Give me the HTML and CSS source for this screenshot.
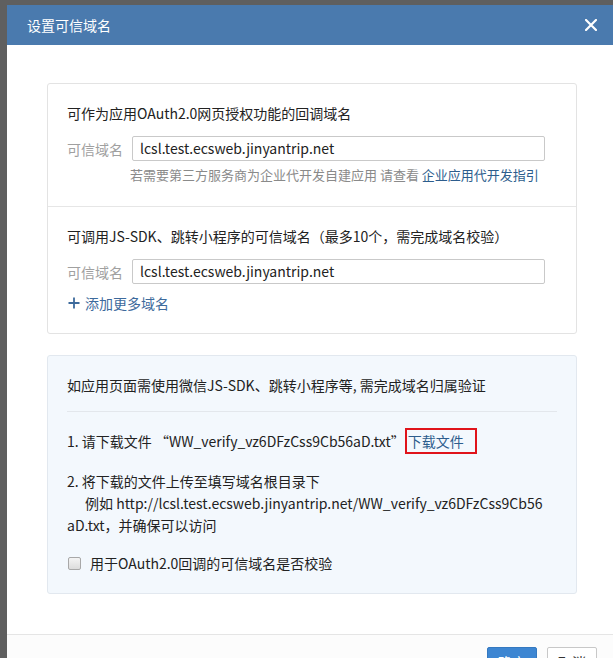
FILE: index.html
```html
<!DOCTYPE html>
<html lang="zh-CN">
<head>
<meta charset="utf-8">
<title>设置可信域名</title>
<link rel="stylesheet" href="styles.css">
</head>
<body>
<div class="dialog">
  <div class="dialog-header">
    <span class="dialog-title">设置可信域名</span>
    <svg class="close" width="12" height="12" viewBox="0 0 12 12"><path d="M1 1 L11 11 M11 1 L1 11" stroke="#fff" stroke-width="2.2" stroke-linecap="square"/></svg>
  </div>
  <div class="dialog-body">
    <div class="card">
      <div class="section">
        <div class="sec-title">可作为应用OAuth2.0网页授权功能的回调域名</div>
        <div class="field">
          <span class="label">可信域名</span>
          <div class="input">lcsl.test.ecsweb.jinyantrip.net</div>
        </div>
        <div class="hint">若需要第三方服务商为企业代开发自建应用 请查看 <a class="link">企业应用代开发指引</a></div>
      </div>
      <div class="section section-2">
        <div class="sec-title">可调用JS-SDK、跳转小程序的可信域名（最多10个，需完成域名校验）</div>
        <div class="field">
          <span class="label">可信域名</span>
          <div class="input">lcsl.test.ecsweb.jinyantrip.net</div>
        </div>
        <div class="add-more">
          <svg class="plus" width="12" height="12" viewBox="0 0 12 12"><path d="M6 0.5 V11.5 M0.5 6 H11.5" stroke="#3d6a9c" stroke-width="1.8"/></svg>
          <span>添加更多域名</span>
        </div>
      </div>
    </div>
    <div class="verify">
      <div class="verify-title">如应用页面需使用微信JS-SDK、跳转小程序等, 需完成域名归属验证</div>
      <div class="verify-divider"></div>
      <div class="step step-1">1. 请下载文件 “WW_verify_vz6DFzCss9Cb56aD.txt”<span class="dl-box"><a class="link">下载文件</a></span></div>
      <div class="step step-2">2. 将下载的文件上传至填写域名根目录下<br><span class="indent">例如 http://lcsl.test.ecsweb.jinyantrip.net/WW_verify_vz6DFzCss9Cb56</span><br>aD.txt，并确保可以访问</div>
      <label class="check">
        <span class="checkbox"></span>
        <span>用于OAuth2.0回调的可信域名是否校验</span>
      </label>
    </div>
  </div>
  <div class="dialog-footer">
    <button class="btn btn-primary">确定</button>
    <button class="btn btn-default">取消</button>
  </div>
</div>
</body>
</html>
```
FILE: styles.css
```css
html, body {
  margin: 0;
  padding: 0;
  overflow: hidden;
  height: 658px;
}
body {
  background: #5f5f5f;
  font-family: "Noto Sans CJK SC", "Noto Sans", sans-serif;
  font-size: 14px;
  color: #333;
}
.dialog {
  margin: 5px 0 0 7px;
  width: 610px;
  background: #fff;
}
.dialog-header {
  height: 40px;
  background: #4a7aae;
  display: flex;
  align-items: center;
  justify-content: space-between;
  padding: 0 20px;
}
.dialog-title {
  color: #fff;
  font-size: 14px;
}
.close {
  display: block;
}
.dialog-body {
  padding: 38px 40px 40px 40px;
}
.card {
  border: 1px solid #e3e3e3;
  border-radius: 3px;
}
.section {
  padding: 19px 31px 21px 19px;
}
.section-2 {
  border-top: 1px solid #e6e6e6;
  padding-bottom: 20px;
}
.sec-title {
  line-height: 20px;
  color: #222;
}
.field {
  display: flex;
  align-items: center;
  margin-top: 13px;
}
.label {
  color: #a0a0a0;
  width: 65px;
  flex: none;
}
.input {
  flex: 1;
  height: 23px;
  line-height: 23px;
  border: 1px solid #c9c9c9;
  border-radius: 2px;
  padding: 0 7px;
  color: #222;
}
.hint {
  margin-top: 4px;
  line-height: 20px;
  padding-left: 63px;
  white-space: nowrap;
  font-size: 13px;
  color: #8a8a8a;
}
.link {
  color: #2d5d8d;
  text-decoration: none;
}
.add-more {
  margin-top: 9px;
  line-height: 20px;
  display: flex;
  align-items: center;
  gap: 5px;
  color: #3d6a9c;
}
.plus {
  display: block;
  margin-left: 1px;
}
.verify {
  margin-top: 21px;
  background: #f3f8fd;
  border: 1px solid #e2e8ef;
  border-radius: 3px;
  padding: 19px;
}
.verify-title {
  line-height: 20px;
  color: #222;
}
.verify-divider {
  height: 1px;
  background: #e3e7ec;
  margin: 16px 0 16px 0;
}
.step {
  line-height: 22px;
  color: #222;
}
.step-1 {
  display: flex;
  align-items: center;
  height: 26px;
}
.dl-box {
  display: inline-block;
  border: 2px solid #e0141b;
  padding: 0 11px 0 1px;
  line-height: 22px;
}
.step-2 {
  margin-top: 16px;
}
.indent {
  padding-left: 18px;
}
.check {
  margin-top: 16px;
  display: flex;
  align-items: center;
  gap: 9px;
  line-height: 22px;
  color: #222;
}
.checkbox {
  width: 11px;
  height: 11px;
  border: 1px solid #a8a8a8;
  border-radius: 2px;
  background: linear-gradient(#f4f4f4, #dcdcdc);
  margin-left: 1px;
}
.dialog-footer {
  border-top: 1px solid #e5e5e5;
  background: #fcfcfc;
  padding: 12px 20px;
  display: flex;
  justify-content: flex-end;
  gap: 10px;
}
.btn {
  width: 50px;
  height: 30px;
  font-family: "Noto Sans CJK SC", sans-serif;
  font-size: 14px;
  border-radius: 2px;
  padding: 0;
}
.btn-primary {
  background: #3d86d2;
  border: 1px solid #3579c0;
  color: #fff;
}
.btn-default {
  background: #fff;
  border: 1px solid #c8c8c8;
  color: #333;
}
```
